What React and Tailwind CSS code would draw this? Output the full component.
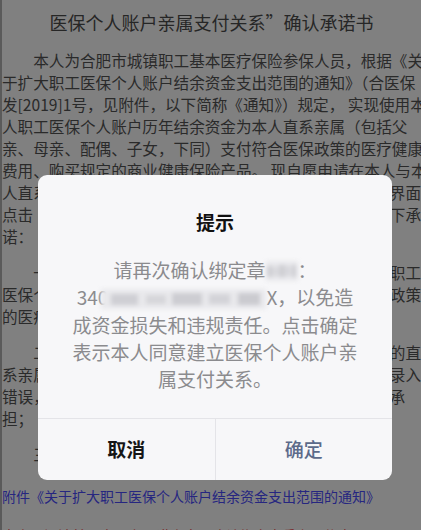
import React from "react";

function Line({ left, right, indent }) {
  return (
    <div className="flex justify-between whitespace-nowrap overflow-hidden h-[22px] leading-[22px]">
      <span className={indent ? "pl-[2em]" : ""}>{left}</span>
      {right ? <span>{right}</span> : null}
    </div>
  );
}

function Blur({ w, className = "" }) {
  return (
    <span
      className={"inline-block align-middle h-[20px] relative blur-[2px] bg-[#e9e9ec] -mt-[3px] " + className}
      style={{ width: w }}
    >
      <span className="absolute left-[6%] top-[5px] w-[16%] h-[11px] bg-[#cfcfd4]" />
      <span className="absolute left-[27%] top-[6px] w-[12%] h-[9px] bg-[#d6d6da]" />
      <span className="absolute left-[43%] top-[4px] w-[18%] h-[12px] bg-[#cdcdd2]" />
      <span className="absolute left-[65%] top-[5px] w-[13%] h-[10px] bg-[#d3d3d8]" />
      <span className="absolute left-[83%] top-[4px] w-[13%] h-[12px] bg-[#cbcbd0]" />
    </span>
  );
}

export default function App() {
  return (
    <div
      className="relative w-[421px] h-[530px] overflow-hidden bg-[#808080] text-[#2a2a2a] border-l-2 border-[#5a5a5a]"
      style={{ fontFamily: '"Noto Sans CJK SC", "Noto Sans", sans-serif' }}
    >
      <div className="pt-[9px] text-center text-[18px] leading-[26px] whitespace-nowrap text-[#262626]">
        医保个人账户亲属支付关系”确认承诺书
      </div>
      <div className="mt-[14px] text-[15.6px]">
        <div>
          <Line indent left="本人为合肥市城镇职工基本医疗保险参保人员，根据《关" />
          <Line left="于扩大职工医保个人账户结余资金支出范围的通知》（合医保" />
          <Line left="发[2019]1号，见附件，以下简称《通知》）规定， 实现使用本" />
          <Line left="人职工医保个人账户历年结余资金为本人直系亲属（包括父" />
          <Line left="亲、母亲、配偶、子女，下同）支付符合医保政策的医疗健康" />
          <Line left="费用、购买规定的商业健康保险产品。 现自愿申请在本人与本" />
          <Line left="人直系亲属之间建立支付关系，在本人确认绑定" right="界面" />
          <Line left="点击“确定”即表示本人作出如" right="下承" />
          <Line left="诺：" />
        </div>
        <div className="mt-[14px]">
          <Line indent left="一、本人自愿使用本人" right="职工" />
          <Line left="医保个人账户历年结余资金为直系亲属支付" right="政策" />
          <Line left="的医疗健康费用。" />
        </div>
        <div className="mt-[14px]">
          <Line indent left="二、本人保证所提供的" right="的直" />
          <Line left="系亲属信息真实有效，如因信息" right="录入" />
          <div className="flex whitespace-nowrap overflow-hidden h-[22px] leading-[22px]">
            <span>错误，造成的损失由本人自行</span>
            <span className="ml-auto mr-[16px]">承</span>
          </div>
          <Line left="担；" />
        </div>
        <div className="mt-[14px]">
          <Line indent left="三、本人承诺" />
        </div>
      </div>
      <div className="mt-[20px] text-[14px] leading-[22px] whitespace-nowrap text-[#262680]">
        附件《关于扩大职工医保个人账户结余资金支出范围的通知》
      </div>
      <div className="mt-[17px] text-[14px] leading-[22px] whitespace-nowrap text-[#7a2a2a]">
        本人已阅读并同意以上承诺内容，确认绑定直系亲属信息。
      </div>

      {/* Dialog */}
      <div className="absolute left-[36px] top-[175px] w-[354px] h-[305px] rounded-[9px] bg-[#f7f7f9] flex flex-col">
        <div className="pt-[34px] text-center text-[19px] leading-[26px] font-bold text-[#111111]">
          提示
        </div>
        <div className="mt-[21px] text-center text-[19px] leading-[27.3px] text-[#8b8b8e] whitespace-nowrap">
          <div>
            请再次确认绑定章<Blur w={32} />：
          </div>
          <div>
            340<Blur w={165} className="-ml-[7px]" />X，以免造
          </div>
          <div>成资金损失和违规责任。点击确定</div>
          <div>表示本人同意建立医保个人账户亲</div>
          <div>属支付关系。</div>
        </div>
        <div className="mt-auto h-[62px] border-t border-[#e4e4e8] flex">
          <div className="flex-1 flex items-center justify-center border-r border-[#e4e4e8] text-[19px] font-bold text-[#161616]">
            取消
          </div>
          <div className="flex-1 flex items-center justify-center text-[19px] font-medium text-[#5c6a8a]">
            确定
          </div>
        </div>
      </div>
    </div>
  );
}
